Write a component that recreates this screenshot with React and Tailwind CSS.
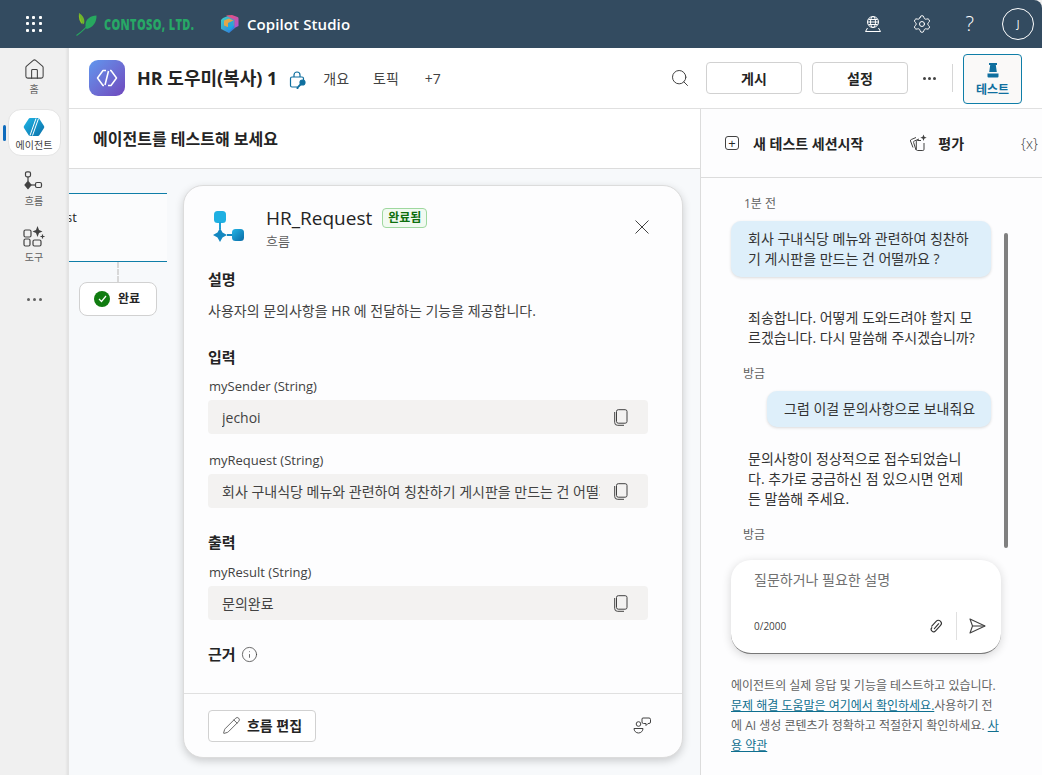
import { Home, Info, Pencil, Search, Settings } from 'lucide-react';

const FONT = 'font-["Open_Sans","Noto_Sans_CJK_KR",sans-serif]';

function GridIcon() {
  const dots = [0, 1, 2, 3, 4, 5, 6, 7, 8];
  return (
    <div className="grid w-[16px] h-[16px] grid-cols-3 gap-[3px]">
      {dots.map((dot) => (
        <span key={dot} className="w-[3px] h-[3px] bg-white rounded-[1px]" />
      ))}
    </div>
  );
}

function Dots({ className = '', dotClass = '' }) {
  return (
    <div className={`flex items-center ${className}`}>
      <span className={`rounded-full ${dotClass}`} />
      <span className={`rounded-full ${dotClass}`} />
      <span className={`rounded-full ${dotClass}`} />
    </div>
  );
}

function ContosoLeaf() {
  return (
    <svg width="22" height="26" viewBox="0 0 22 26" fill="none">
      <path d="M3 2c-.6 5 .4 9 3.400 11.500C5.800 9 5 5 3 2z" fill="#8fc31f" />
      <path d="M3 2c4 2.500 6 6 5.200 10-.1.6-.6 1-1.200 1.300C5 9.500 3.500 6 3 2z" fill="#6fb52c" />
      <path d="M20.500 4.500c-6.500.5-10.500 3.500-11 9-.2 2 .3 3.500 1.300 4.500 6-1.500 10-6.500 9.700-13.500z" fill="#27a85f" />
      <path d="M0.500 24.500C5 21.500 11 16 16 9" stroke="#27a85f" strokeWidth="1.100" />
    </svg>
  );
}

function CopilotLogo() {
  return (
    <svg width="19" height="20" viewBox="0 0 19 20">
      <defs>
        <linearGradient id="cpA" x1="0" y1="0" x2="1" y2="1">
          <stop offset="0" stopColor="#3dd6c6" />
          <stop offset="1" stopColor="#2f6fe0" />
        </linearGradient>
        <linearGradient id="cpB" x1="0" y1="0" x2="1" y2="1">
          <stop offset="0" stopColor="#f0506e" />
          <stop offset="1" stopColor="#a855d8" />
        </linearGradient>
      </defs>
      <path d="M3 4l6-2.500L15 4v10l-6 5-7-3.500C1 15 1 14.500 1 14V6z" fill="url(#cpA)" />
      <path d="M6 1.500L12 1l5.500 2a1.500 1.500 0 0 1 1 1.500V12l-4 2V6z" fill="url(#cpB)" />
      <path d="M4 6.500l5-2 4.500 2v5l-4.500 2-5-2z" fill="#f5a63a" opacity=".9" />
      <path d="M8 9l5.500-2.500V13l-4 3.500L8 15.500z" fill="#17a6e8" opacity=".9" />
    </svg>
  );
}

function EnvironmentIcon() {
  return (
    <svg width="18" height="18" viewBox="0 0 18 18" fill="none" stroke="white" strokeWidth="1">
      <circle cx="9" cy="7" r="5.500" />
      <ellipse cx="9" cy="7" rx="2.500" ry="5.500" />
      <path d="M3.500 7h11M4.500 4.500h9M4.500 9.500h9" />
      <path d="M3.500 13l-2 3.500h15l-2-3.500" />
    </svg>
  );
}

function AgentBadge() {
  return (
    <div className="w-[36px] h-[36px] rounded-[9px] bg-gradient-to-br from-[#5e97ee] to-[#6e47bd] flex items-center justify-center">
      <svg width="22" height="18" viewBox="0 0 22 18" fill="none" stroke="white" strokeWidth="1.500" strokeLinejoin="round">
        <path d="M10 1.500H7L1.500 9 7 16.500h1" />
        <path d="M12 16.500h3L20.500 9 15 1.500h-1" />
        <path d="M12.500 2L9 16" />
      </svg>
    </div>
  );
}

function LockKeyIcon() {
  return (
    <svg width="18" height="20" viewBox="0 0 18 20" fill="none" stroke="#0f6f9f" strokeWidth="1.200">
      <path d="M5 7V5a3 3 0 0 1 6 0v2" />
      <path d="M8 17H3a1.500 1.500 0 0 1-1.500-1.500v-7A1.500 1.500 0 0 1 3 7h10a1.500 1.500 0 0 1 1.500 1.500V10" />
      <circle cx="13.500" cy="12.500" r="2.500" fill="#0f6f9f" />
      <path d="M12 14l-3.500 3.500v1.500" strokeWidth="1.800" />
    </svg>
  );
}

function TestIcon() {
  return (
    <svg width="16" height="17" viewBox="0 0 16 17" fill="#0f6f9f">
      <path d="M4 1h8v2h-1.200l1 7H4.200l1-7H4z" />
      <path d="M2.500 11.500h11v3a1 1 0 0 1-1 1h-9a1 1 0 0 1-1-1z" />
    </svg>
  );
}

function AgentNavIcon() {
  return (
    <svg width="22" height="20" viewBox="0 0 22 20">
      <defs>
        <linearGradient id="anA" x1="0" y1="0" x2="1" y2="1">
          <stop offset="0" stopColor="#1fb6e6" />
          <stop offset="1" stopColor="#0a6fa8" />
        </linearGradient>
      </defs>
      <path d="M7 1h8a1.500 1.500 0 0 1 1.300.7l4.700 7.300a2 2 0 0 1 0 2l-4.700 7.300a1.500 1.500 0 0 1-1.300.7H7a1.500 1.500 0 0 1-1.300-.7L1 11a2 2 0 0 1 0-2l4.700-7.300A1.500 1.500 0 0 1 7 1z" fill="url(#anA)" />
      <path d="M13 1.500L7 18.500M15.500 1.500L9.500 18.500" stroke="white" strokeWidth="1" fill="none" />
    </svg>
  );
}

function FlowNavIcon() {
  return (
    <svg width="20" height="20" viewBox="0 0 20 20" fill="none" stroke="#424242" strokeWidth="1.200">
      <rect x="1.500" y="0.800" width="5" height="5" rx="1.500" />
      <path d="M4 6v4" />
      <path d="M4 10.500l3 3.500-3 3.500L1 14z" fill="#424242" />
      <path d="M7 14h4" />
      <rect x="11.500" y="11.500" width="6" height="5" rx="1.500" />
    </svg>
  );
}

function ToolNavIcon() {
  return (
    <svg width="22" height="22" viewBox="0 0 22 22" fill="none" stroke="#424242" strokeWidth="1.200">
      <rect x="1" y="4" width="7" height="7" rx="1.500" />
      <rect x="1" y="13" width="6" height="7" rx="1.500" />
      <rect x="10" y="14" width="8" height="6" rx="1.500" />
      <path d="M14.500 0l1.500 4 3.500 1.500-3.500 1.500-1.500 4-1.500-4L9.500 5.500 13 4z" fill="#424242" stroke="none" />
      <path d="M19.500 8.500v4M17.500 10.500h4" />
    </svg>
  );
}

function FlowCardIcon() {
  return (
    <svg width="32" height="32" viewBox="0 0 32 32">
      <defs>
        <linearGradient id="fcA" x1="0" y1="0" x2="1" y2="1">
          <stop offset="0" stopColor="#22b5e6" />
          <stop offset="1" stopColor="#0a6aa5" />
        </linearGradient>
      </defs>
      <rect x="2" y="0" width="12" height="12" rx="3.500" fill="#1fb0e2" />
      <rect x="7" y="11" width="2" height="7" fill="#1f9fd6" />
      <path d="M8 17l2.500 4.500L15 24l-4.500 2.500L8 31l-2.500-4.500L1 24l4.500-2.500z" fill="#1487c0" />
      <rect x="15" y="23" width="6" height="2" fill="#1487c0" />
      <rect x="20" y="18" width="12" height="12" rx="3.500" fill="url(#fcA)" />
    </svg>
  );
}

function CloseIcon() {
  return (
    <svg width="14" height="14" viewBox="0 0 14 14" fill="none" stroke="#424242" strokeWidth="1">
      <path d="M0.500 0.500l13 13M13.500 0.500l-13 13" />
    </svg>
  );
}

function CopyIcon() {
  return (
    <svg width="14" height="17" viewBox="0 0 14 17" fill="none" stroke="#424242" strokeWidth="1">
      <rect x="2.500" y="0.700" width="10.500" height="13.500" rx="1.800" />
      <path d="M0.700 3v10.500a2.800 2.800 0 0 0 2.800 2.800H10" />
    </svg>
  );
}

function EvalIcon() {
  return (
    <svg width="18" height="18" viewBox="0 0 18 18" fill="none" stroke="#424242" strokeWidth="1">
      <path d="M12 6.500H8.500a1.200 1.200 0 0 0-1.200 1.200v7.600a1.200 1.200 0 0 0 1.200 1.200h5.300a1.200 1.200 0 0 0 1.200-1.200V9" />
      <path d="M7 16L4.600 8.500a1.200 1.200 0 0 1 .8-1.500L10 5" />
      <path d="M4 13.500L1.500 7a1.200 1.200 0 0 1 .8-1.500L7 3.500" />
      <path d="M14.500 0.500l.9 2.300 2.300.9-2.300.9-.9 2.300-.9-2.300-2.300-.9 2.300-.9z" fill="#424242" stroke="none" />
    </svg>
  );
}

function FeedbackIcon() {
  return (
    <svg width="18" height="17" viewBox="0 0 18 17" fill="none" stroke="#424242" strokeWidth="1">
      <circle cx="5.500" cy="7" r="2.300" />
      <path d="M1 11.500h9a4.500 4.500 0 0 1-9 0z" />
      <path d="M9.500 1h6.500a1.500 1.500 0 0 1 1.500 1.500v2.500a1.500 1.500 0 0 1-1.500 1.500h-1l-2 2V6.500h-2.500A1.500 1.500 0 0 1 9 5V2z" />
    </svg>
  );
}

function ClipIcon() {
  return (
    <svg width="16" height="16" viewBox="0 0 16 16" fill="none" stroke="#333333" strokeWidth="1.100" strokeLinecap="round">
      <g transform="rotate(42 8 8)">
        <path d="M5 11V4.500a3 3 0 0 1 6 0V12a2.500 2.500 0 0 1-5 0" />
        <path d="M8.500 4.500V11" />
      </g>
    </svg>
  );
}

function SendIcon() {
  return (
    <svg width="17" height="16" viewBox="0 0 17 16" fill="none" stroke="#424242" strokeWidth="1.100" strokeLinejoin="round">
      <path d="M1 1l15 7-15 7 2.500-7z" />
      <path d="M3.500 8H16" />
    </svg>
  );
}

function NavItem({ icon, label, className = '' }) {
  return (
    <div className={`flex flex-col items-center ${className}`}>
      <div className="h-[22px] flex items-center justify-center">{icon}</div>
      <span className="text-[10px] leading-[12px] mt-[3px] text-[#616161]">{label}</span>
    </div>
  );
}

function Sidebar() {
  return (
    <aside className="w-[69px] shrink-0 bg-[#f0f0f0] shadow-[inset_-3px_0_3px_-2px_rgba(0,0,0,0.08)] border-r border-[#e3e3e3] flex flex-col items-center relative">
      <NavItem
        className="mt-[10px]"
        icon={<Home className="w-[23px] h-[23px] text-[#424242]" strokeWidth={1.100} />}
        label="홈"
      />
      <div className="absolute left-[3px] top-[77px] w-[3px] h-[16px] rounded-full bg-[#0f6cbd]" />
      <div className="mt-[14px] w-[53px] h-[47px] bg-white border border-[#e4e4e4] rounded-[13px] flex flex-col items-center pt-[7px]">
        <AgentNavIcon />
        <span className="text-[10px] leading-[12px] mt-[2px] text-[#424242]">에이전트</span>
      </div>
      <NavItem className="mt-[14px]" icon={<FlowNavIcon />} label="흐름" />
      <NavItem className="mt-[19px]" icon={<ToolNavIcon />} label="도구" />
      <Dots className="mt-[35px] gap-[3px]" dotClass="w-[3px] h-[3px] bg-[#616161]" />
    </aside>
  );
}

function TopBar() {
  return (
    <header className="h-[48px] shrink-0 bg-[#334b60] rounded-tr-[8px] flex items-center text-white">
      <div className="ml-[26px] flex"><GridIcon /></div>
      <div className="ml-[34px] flex items-center"><ContosoLeaf /></div>
      <span className="ml-[6px] w-[92px] text-[15px] font-extrabold text-[#27a866] tracking-[0.5px] whitespace-nowrap scale-x-[0.73] origin-left">CONTOSO, LTD.</span>
      <div className="ml-[24px] flex"><CopilotLogo /></div>
      <span className="ml-[8px] text-[15px] font-semibold tracking-[0.1px]">Copilot Studio</span>
      <div className="ml-auto flex items-center mr-[8px]">
        <EnvironmentIcon />
        <Settings className="w-[20px] h-[20px] ml-[30px]" strokeWidth={1.200} />
        <span className="ml-[34px] text-[20px] font-light leading-none">?</span>
        <div className="ml-[28px] w-[32px] h-[32px] rounded-full border border-white flex items-center justify-center text-[10px]">J</div>
      </div>
    </header>
  );
}

function PageHeader() {
  return (
    <div className="h-[61px] shrink-0 bg-white border-b border-[#e0e0e0] flex items-center pl-[20px]">
      <AgentBadge />
      <h1 className="ml-[12px] text-[18px] font-bold text-[#242424] whitespace-nowrap">HR 도우미(복사) 1</h1>
      <div className="ml-[12px] mt-[3px]"><LockKeyIcon /></div>
      <span className="ml-[16px] text-[14px] text-[#424242]">개요</span>
      <span className="ml-[24px] text-[14px] text-[#424242]">토픽</span>
      <span className="ml-[26px] text-[14px] text-[#424242]">+7</span>
      <div className="ml-auto flex items-center pr-[20px]">
        <Search className="w-[20px] h-[20px] text-[#424242]" strokeWidth={1.200} />
        <button type="button" className="ml-[16px] w-[96px] h-[32px] rounded-[4px] border border-[#d1d1d1] text-[14px] font-bold text-[#242424]">게시</button>
        <button type="button" className="ml-[10px] w-[96px] h-[32px] rounded-[4px] border border-[#d1d1d1] text-[14px] font-bold text-[#242424]">설정</button>
        <Dots className="ml-[15px] w-[14px] gap-[2px]" dotClass="w-[3px] h-[3px] bg-[#424242]" />
        <div className="ml-[15px] w-px h-[28px] bg-[#d6d6d6]" />
        <div className="ml-[10px] mt-[2px] w-[59px] h-[50px] rounded-[4px] border border-[#0f7ea8] bg-[#faf9f8] flex flex-col items-center pt-[7px]">
          <TestIcon />
          <span className="text-[12px] leading-[16px] mt-[3px] font-bold text-[#0f6f9f]">테스트</span>
        </div>
      </div>
    </div>
  );
}

function SectionTitle({ children, className = '' }) {
  return <h3 className={`text-[15px] leading-[20px] font-bold text-[#242424] ${className}`}>{children}</h3>;
}

function ValueField({ label, value, className = '' }) {
  return (
    <div className={className}>
      <div className="text-[13px] leading-[18px] text-[#424242] pl-px">{label}</div>
      <div className="mt-[5px] h-[34px] bg-[#f3f2f1] rounded-[4px] flex items-center pl-[14px] pr-[20px]">
        <span className="flex-1 min-w-0 overflow-hidden text-[14px] text-[#424242] whitespace-nowrap">{value}</span>
        <span className="ml-[14px] shrink-0 flex"><CopyIcon /></span>
      </div>
    </div>
  );
}

function FlowCard() {
  return (
    <section className="ml-[16px] mt-[16px] w-[500px] h-[573px] shrink-0 bg-[#fdfdfe] border border-[#dcdcdc] rounded-[20px] shadow-[0_3px_8px_rgba(0,0,0,0.18)] flex flex-col">
      <div className="flex-1 pl-[24px] pr-[34px] pt-[20px]">
        <div className="flex items-start">
          <div className="ml-[4px] mt-[5px] flex"><FlowCardIcon /></div>
          <div className="ml-[22px]">
            <div className="flex items-center">
              <span className="text-[19px] leading-[24px] font-medium text-[#242424]">HR_Request</span>
              <span className="ml-[10px] h-[20px] w-[45px] flex items-center justify-center rounded-[4px] border border-[#9fd89f] bg-[#f1faf1] text-[12px] font-bold text-[#0e700e]">완료됨</span>
            </div>
            <div className="text-[13px] leading-[16px] mt-[3px] text-[#616161]">흐름</div>
          </div>
          <div className="ml-auto mr-[-1px] mt-[14px] flex"><CloseIcon /></div>
        </div>
        <SectionTitle className="mt-[20px]">설명</SectionTitle>
        <p className="mt-[13px] text-[14px] leading-[18px] text-[#424242]">사용자의 문의사항을 HR 에 전달하는 기능을 제공합니다.</p>
        <SectionTitle className="mt-[27px]">입력</SectionTitle>
        <ValueField className="mt-[10px]" label="mySender (String)" value="jechoi" />
        <ValueField className="mt-[17px]" label="myRequest (String)" value="회사 구내식당 메뉴와 관련하여 칭찬하기 게시판을 만드는 건 어떨까요 ?" />
        <SectionTitle className="mt-[24px]">출력</SectionTitle>
        <ValueField className="mt-[11px]" label="myResult (String)" value="문의완료" />
        <div className="mt-[24px] flex items-center">
          <SectionTitle>근거</SectionTitle>
          <Info className="ml-[5px] w-[17px] h-[17px] text-[#424242]" strokeWidth={1.100} />
        </div>
      </div>
      <div className="h-[64px] shrink-0 border-t border-[#e0e0e0] flex items-center pl-[24px] pr-[31px]">
        <button type="button" className="w-[108px] h-[32px] rounded-[4px] border border-[#d1d1d1] bg-white flex items-center justify-center text-[14px] font-bold text-[#242424]">
          <Pencil className="w-[19px] h-[19px] text-[#424242] mr-[6px]" strokeWidth={1.000} />
          흐름 편집
        </button>
        <div className="ml-auto flex"><FeedbackIcon /></div>
      </div>
    </section>
  );
}

function CanvasPanel() {
  return (
    <div className="w-[631px] shrink-0 flex flex-col min-h-0">
      <div className="h-[60px] shrink-0 bg-white border-b border-[#dcdcdc] flex items-center pl-[24px]">
        <h2 className="text-[16px] font-bold text-[#242424]">에이전트를 테스트해 보세요</h2>
      </div>
      <div className="flex-1 min-h-0 bg-[#f7f9fb] flex items-start">
        <div className="w-[98px] shrink-0 mt-[24px] flex flex-col">
          <div className="h-px bg-[#0f7ea8]" />
          <div className="h-[67px] overflow-hidden bg-[#fbfcfd] text-[13px] text-[#242424] pt-[14px] leading-[18px]">
            <span className="block -ml-[3px]">st</span>
          </div>
          <div className="h-px bg-[#0f7ea8]" />
          <div className="ml-[48px] h-[20px] border-l-2 border-dashed border-[#d8d8d8]" />
          <div className="ml-[10px] w-[78px] h-[34px] rounded-[8px] border border-[#d1d1d1] bg-white flex items-center pl-[14px]">
            <span className="w-[16px] h-[16px] rounded-full bg-[#107c10] flex items-center justify-center">
              <svg width="9" height="8" viewBox="0 0 9 8" fill="none" stroke="white" strokeWidth="1.200"><path d="M1 4l2.500 2.500L8 1" /></svg>
            </span>
            <span className="ml-[8px] text-[12px] font-bold text-[#242424]">완료</span>
          </div>
        </div>
        <FlowCard />
      </div>
    </div>
  );
}

function TimeLabel({ children, className = '' }) {
  return <div className={`text-[12px] leading-[16px] text-[#616161] ${className}`}>{children}</div>;
}

function Bubble({ children, className = '' }) {
  return (
    <div className={`bg-[#deeffa] rounded-[10px] shadow-[0_1px_3px_rgba(0,0,0,0.14)] text-[14px] leading-[20px] text-[#333333] ${className}`}>
      {children}
    </div>
  );
}

function ChatPanel() {
  return (
    <div className="flex-1 min-w-0 bg-[#fdfdfe] border-l border-[#dcdcdc] flex flex-col min-h-0">
      <div className="h-[69px] shrink-0 border-b border-[#dcdcdc] flex items-center pl-[24px] text-[#242424] whitespace-nowrap">
        <span className="w-[14px] h-[14px] rounded-[3px] border border-[#424242] flex items-center justify-center text-[13px] leading-none">+</span>
        <span className="ml-[14px] text-[14px] font-bold">새 테스트 세션시작</span>
        <span className="ml-[46px] flex"><EvalIcon /></span>
        <span className="ml-[11px] text-[14px] font-bold">평가</span>
        <span className="ml-[57px] text-[14px] font-light text-[#424242]">{'{x}'}</span>
      </div>
      <div className="relative flex-1 min-h-0 pl-[30px] pr-[40px] pt-[18px]">
        <div className="absolute right-[34px] top-[55px] w-[4px] h-[315px] rounded-full bg-[#808080]" />
        <TimeLabel className="pl-[13px]">1분 전</TimeLabel>
        <Bubble className="mt-[9px] w-[260px] h-[56px] pl-[17px] pr-[18px] pt-[8px]">
          회사 구내식당 메뉴와 관련하여 칭찬하기 게시판을 만드는 건 어떨까요 ?
        </Bubble>
        <p className="mt-[31px] w-[236px] ml-[17px] text-[14px] leading-[20px] text-[#333333]">
          죄송합니다. 어떻게 도와드려야 할지 모르겠습니다. 다시 말씀해 주시겠습니까?
        </p>
        <TimeLabel className="mt-[18px] pl-[12px]">방금</TimeLabel>
        <Bubble className="mt-[9px] ml-[36px] w-[224px] h-[36px] pl-[17px] pt-[8px]">그럼 이걸 문의사항으로 보내줘요</Bubble>
        <p className="mt-[22px] w-[220px] ml-[17px] text-[14px] leading-[20px] text-[#333333]">
          문의사항이 정상적으로 접수되었습니다. 추가로 궁금하신 점 있으시면 언제든 말씀해 주세요.
        </p>
        <TimeLabel className="mt-[18px] pl-[12px]">방금</TimeLabel>
        <div className="mt-[17px] w-[270px] h-[94px] bg-white rounded-[20px] border-b border-b-[#777777] shadow-[0_2px_10px_rgba(0,0,0,0.16)] flex flex-col pl-[23px] pr-[15px]">
          <div className="mt-[10px] text-[14px] leading-[20px] text-[#707070]">질문하거나 필요한 설명</div>
          <div className="mt-auto mb-[13px] flex items-center">
            <span className="text-[10px] text-[#424242]">0/2000</span>
            <span className="ml-auto flex"><ClipIcon /></span>
            <div className="ml-[12px] w-px h-[28px] bg-[#e0e0e0]" />
            <span className="ml-[12px] flex"><SendIcon /></span>
          </div>
        </div>
        <p className="mt-[22px] w-[272px] text-[12px] leading-[20px] text-[#616161]">
          에이전트의 실제 응답 및 기능을 테스트하고 있습니다. <span className="underline text-[#0f6f8f]">문제 해결 도움말은 여기에서 확인하세요.</span>사용하기 전에 AI 생성 콘텐츠가 정확하고 적절한지 확인하세요. <span className="underline text-[#0f6f8f]">사용 약관</span>
        </p>
      </div>
    </div>
  );
}

export default function App() {
  return (
    <div className={`w-[1042px] h-[775px] overflow-hidden flex flex-col bg-[#f0f0f0] ${FONT}`}>
      <TopBar />
      <div className="flex-1 min-h-0 flex">
        <Sidebar />
        <main className="flex-1 min-w-0 flex flex-col min-h-0">
          <PageHeader />
          <div className="flex-1 min-h-0 flex">
            <CanvasPanel />
            <ChatPanel />
          </div>
        </main>
      </div>
    </div>
  );
}
